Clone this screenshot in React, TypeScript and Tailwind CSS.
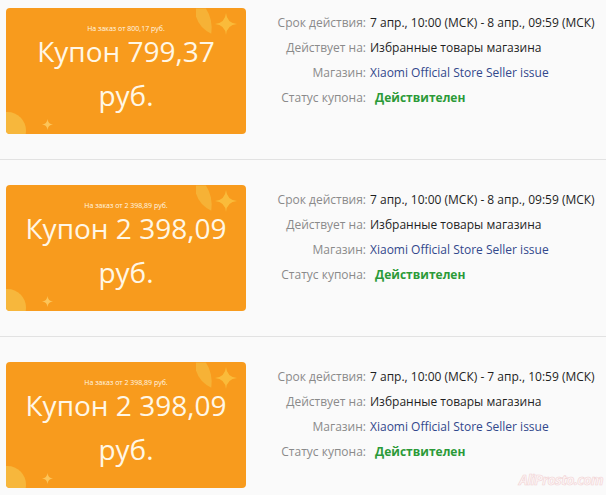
import React from "react";

interface Coupon {
  minOrder: string;
  amount: string;
  period: string;
}

const coupons: Coupon[] = [
  {
    minOrder: "На заказ от 800,17 руб.",
    amount: "Купон 799,37",
    period: "7 апр., 10:00 (МСК) - 8 апр., 09:59 (МСК)",
  },
  {
    minOrder: "На заказ от 2 398,89 руб.",
    amount: "Купон 2 398,09",
    period: "7 апр., 10:00 (МСК) - 8 апр., 09:59 (МСК)",
  },
  {
    minOrder: "На заказ от 2 398,89 руб.",
    amount: "Купон 2 398,09",
    period: "7 апр., 10:00 (МСК) - 7 апр., 10:59 (МСК)",
  },
];

function Star({ className }: { className: string }) {
  return (
    <svg viewBox="0 0 24 24" className={className}>
      <path d="M12 0 Q13 11 24 12 Q13 13 12 24 Q11 13 0 12 Q11 11 12 0Z" fill="currentColor" />
    </svg>
  );
}

function CouponCard({ c }: { c: Coupon }) {
  return (
    <div className="relative ml-[6px] w-[240px] h-[126px] shrink-0 overflow-hidden rounded-[4px] bg-[#f89b1d] text-[#fff7e6]">
      {/* decorations */}
      <svg viewBox="0 0 20 30" className="absolute left-[190px] top-0 w-[18px] h-[28px] text-[#f6b236]">
        <path d="M0 0 L11 0 Q19 12 17 28 Q4 22 0 9Z" fill="currentColor" />
      </svg>
      <Star className="absolute left-[209px] top-[5px] w-[22px] h-[22px] text-[#fabb3a]" />
      <div className="absolute left-[-17px] top-[104px] w-[37px] h-[37px] rounded-full bg-[#f7b73c]" />
      <Star className="absolute left-[36px] top-[111px] w-[11px] h-[11px] text-[#fcc55a]" />

      <div className="relative flex flex-col items-center pt-[16px]">
        <div className="text-[7px] leading-[10px] whitespace-nowrap">{c.minOrder}</div>
        <div className="text-[28px] leading-[44px] mt-[-5px] whitespace-nowrap">{c.amount}</div>
        <div className="text-[28px] leading-[44px]">руб.</div>
      </div>
    </div>
  );
}

function CouponRow({ c, first, last }: { c: Coupon; first: boolean; last: boolean }) {
  return (
    <div
      className={`flex items-start ${first ? "pt-[8px]" : "pt-[25px]"} pb-[25px] ${
        last ? "" : "border-b border-[#e2e2e2]"
      }`}
    >
      <CouponCard c={c} />
      <div className="mt-[2px] grid grid-cols-[120px_1fr] content-start gap-x-[4px] text-[12px] leading-[25px] whitespace-nowrap">
        <div className="text-right text-[#8a8a8a]">Срок действия:</div>
        <div className="text-[#1f1f1f]">{c.period}</div>
        <div className="text-right text-[#8a8a8a]">Действует на:</div>
        <div className="text-[#1f1f1f]">Избранные товары магазина</div>
        <div className="text-right text-[#8a8a8a]">Магазин:</div>
        <div className="text-[#32488c]">Xiaomi Official Store Seller issue</div>
        <div className="text-right text-[#8a8a8a]">Статус купона:</div>
        <div className="pl-[5px] font-bold text-[#2b9a38]">Действителен</div>
      </div>
    </div>
  );
}

export default function App() {
  return (
    <div
      className="relative w-[606px] h-[495px] overflow-hidden bg-[#fafafa]"
      style={{ fontFamily: '"Open Sans", "Noto Sans", sans-serif' }}
    >
      {coupons.map((c, i) => (
        <CouponRow key={i} c={c} first={i === 0} last={i === coupons.length - 1} />
      ))}
      <div
        className="absolute left-[519px] top-[469px] whitespace-nowrap text-[14px] font-bold italic tracking-[-0.6px] text-[#fdf6f6]"
        style={{ WebkitTextStroke: "0.6px #f1d2d4" }}
      >
        AliProsto.com
      </div>
    </div>
  );
}
